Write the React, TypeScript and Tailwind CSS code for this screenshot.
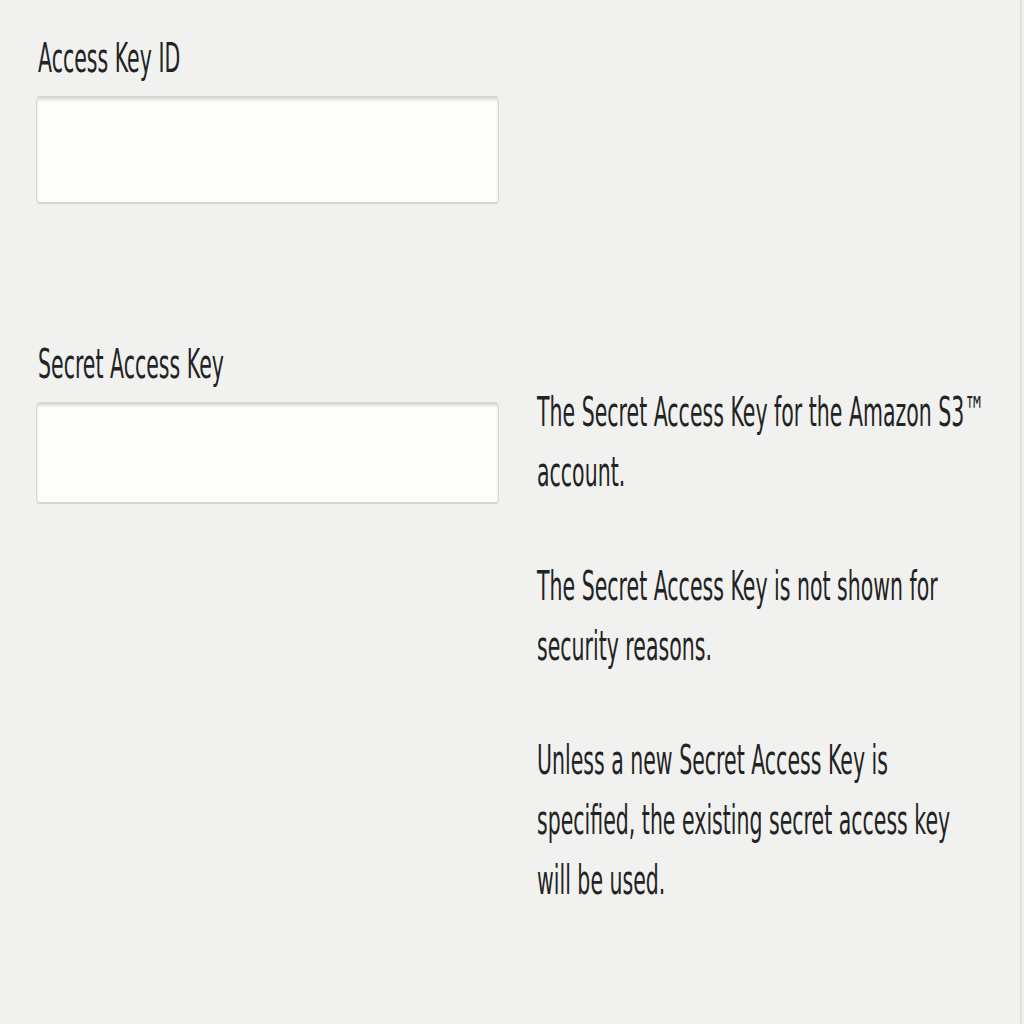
export default function App() {
  return (
    <div className="h-[1024px] w-[1024px] overflow-hidden bg-[#f1f2f0]">
      <div
        className="relative h-[512px] w-[1024px] origin-top-left scale-y-200 text-[#232323]"
        style={{ fontFamily: '"DejaVu Sans", "Noto Sans", sans-serif' }}
      >
        <div className="absolute right-[2px] top-0 h-full w-[2px] bg-[#e0e1df]" />
        <div className="flex gap-[38px] pl-[36px] pt-[14px]">
          <div className="flex w-[463px] flex-col">
            <label className="pl-[2px] text-[20.5px] leading-[30px]">Access Key ID</label>
            <div className="mt-[4px] h-[54px] rounded-[3px] border border-[#d6d6d4] bg-[#fdfdfb] shadow-[inset_0_1px_2px_rgba(0,0,0,0.12)]" />
            <label className="mt-[65px] pl-[2px] text-[20.5px] leading-[30px]">Secret Access Key</label>
            <div className="mt-[4px] h-[51px] rounded-[3px] border border-[#d6d6d4] bg-[#fdfdfb] shadow-[inset_0_1px_2px_rgba(0,0,0,0.12)]" />
          </div>
          <div className="mt-[177px] flex flex-col gap-[27px] text-[20.5px] leading-[30px]">
            <p>
              <span className="block whitespace-nowrap">The Secret Access Key for the Amazon S3™</span>
              <span className="block">account.</span>
            </p>
            <p>
              <span className="block whitespace-nowrap">The Secret Access Key is not shown for</span>
              <span className="block">security reasons.</span>
            </p>
            <p>
              <span className="block whitespace-nowrap">Unless a new Secret Access Key is</span>
              <span className="block whitespace-nowrap">specified, the existing secret access key</span>
              <span className="block">will be used.</span>
            </p>
          </div>
        </div>
      </div>
    </div>
  );
}
